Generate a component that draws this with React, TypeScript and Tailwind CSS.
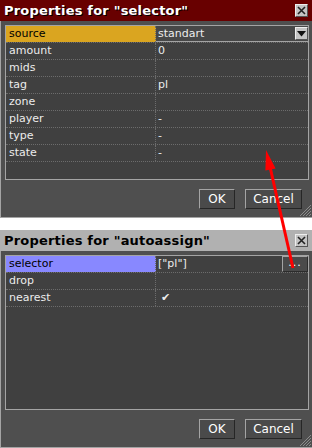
import React from 'react';

type Row = { key: string; value?: React.ReactNode; selected?: string; kind?: 'combo' | 'picker' };

const font = { fontFamily: '"DejaVu Sans", Verdana, sans-serif' };

function TinyButton({ children }: { children: React.ReactNode }) {
  return (
    <div className="w-[13px] h-[13px] bg-[#c4c4c4] border border-t-[#eeeeee] border-l-[#eeeeee] border-r-[#555555] border-b-[#555555] flex items-center justify-center">
      {children}
    </div>
  );
}

function Grip() {
  return (
    <svg className="absolute right-0 bottom-0" width="12" height="12" viewBox="0 0 12 12">
      <path d="M11 3 L3 11 M11 6 L6 11 M11 9 L9 11 M11 0 L0 11" stroke="#8c8c8c" strokeWidth="1" />
    </svg>
  );
}

function PropsWindow({ title, dark, rows }: { title: string; dark: boolean; rows: Row[] }) {
  return (
    <div className="w-[312px] h-[218px] flex flex-col">
      {/* Title bar */}
      <div
        className={
          'h-[21px] flex items-center justify-between pl-[4px] pr-[4px] ' +
          (dark ? 'bg-[#680000]' : 'bg-[#b1b1b1]')
        }
      >
        <span
          className={'text-[13px] font-bold leading-none tracking-[0.2px] ' + (dark ? 'text-white' : 'text-black')}
          style={dark ? { textShadow: '1px 1px 0 #000' } : undefined}
        >
          {title}
        </span>
        <TinyButton>
          <svg width="9" height="9" viewBox="0 0 9 9">
            <path d="M1 1 L8 8 M8 1 L1 8" stroke="#222" strokeWidth="1.6" />
          </svg>
        </TinyButton>
      </div>

      {/* Body */}
      <div className="relative flex-1 bg-[#4f4f4f] border-l border-b border-[#a4a4a4] pt-[4px] pl-[4px] pr-[3px] flex flex-col">
        <div className="h-[155px] border border-[#a4a4a4] bg-[#404040]">
          {rows.map((r) => (
            <div key={r.key} className="h-[17px] flex border-b border-dotted border-[#6c6c6c]">
              <div
                className={
                  'w-[150px] pl-[3px] text-[11px] leading-[16px] border-r border-dotted border-[#6c6c6c] ' +
                  (r.selected ? r.selected + ' text-black' : 'text-[#ececec]')
                }
              >
                {r.key}
              </div>
              {r.kind === 'combo' ? (
                <div className="flex-1 flex items-start justify-between bg-[#474747] border-b border-[#a4a4a4]">
                  <span className="pl-[2px] text-[11px] leading-[15px] text-[#ececec]">{r.value}</span>
                  <div className="mt-[1px]">
                    <TinyButton>
                      <svg width="9" height="6" viewBox="0 0 9 6">
                        <path d="M0 0 H9 L4.5 5.5 Z" fill="#111" />
                      </svg>
                    </TinyButton>
                  </div>
                </div>
              ) : r.kind === 'picker' ? (
                <div className="flex-1 flex items-start justify-between">
                  <span className="pl-[2px] text-[11px] leading-[16px] text-[#ececec]">{r.value}</span>
                  <div className="w-[26px] h-[16px] bg-[#4a4a4a] border border-t-[#a4a4a4] border-l-[#a4a4a4] border-r-[#2c2c2c] border-b-[#2c2c2c] text-[11px] leading-[12px] text-white text-center tracking-[1px]">
                    ...
                  </div>
                </div>
              ) : (
                <div className="flex-1 pl-[2px] text-[11px] leading-[16px] text-[#ececec]">{r.value}</div>
              )}
            </div>
          ))}
        </div>

        <div className="mt-[9px] flex justify-end gap-[10px] pr-[7px]">
          <div className="w-[36px] h-[20px] bg-[#4a4a4a] border border-t-[#a4a4a4] border-l-[#a4a4a4] border-r-[#262626] border-b-[#262626] flex items-center justify-center text-[12px] text-white">
            OK
          </div>
          <div className="w-[57px] h-[20px] bg-[#4a4a4a] border border-t-[#a4a4a4] border-l-[#a4a4a4] border-r-[#262626] border-b-[#262626] flex items-center justify-center text-[12px] text-white">
            Cancel
          </div>
        </div>
        <Grip />
      </div>
    </div>
  );
}

export default function App() {
  const selectorRows: Row[] = [
    { key: 'source', value: 'standart', selected: 'bg-[#daa520]', kind: 'combo' },
    { key: 'amount', value: '0' },
    { key: 'mids', value: '' },
    { key: 'tag', value: 'pl' },
    { key: 'zone', value: '' },
    { key: 'player', value: '-' },
    { key: 'type', value: '-' },
    { key: 'state', value: '-' },
  ];
  const autoRows: Row[] = [
    { key: 'selector', value: '["pl"]', selected: 'bg-[#8888ff]', kind: 'picker' },
    { key: 'drop', value: '' },
    { key: 'nearest', value: <span className="pl-[3px]">✔</span> },
  ];

  return (
    <div className="relative w-[312px] h-[448px] bg-white overflow-hidden" style={font}>
      <div className="flex flex-col gap-[12px]">
        <PropsWindow title={'Properties for "selector"'} dark rows={selectorRows} />
        <PropsWindow title={'Properties for "autoassign"'} dark={false} rows={autoRows} />
      </div>

      {/* Red annotation arrow */}
      <svg className="absolute left-0 top-0 pointer-events-none" width="312" height="448" viewBox="0 0 312 448">
        <line x1="293" y1="268" x2="270.5" y2="169" stroke="#ff0000" strokeWidth="3" />
        <polygon points="266,150 275.6,168.4 265.4,170.6" fill="#ff0000" />
      </svg>
    </div>
  );
}
